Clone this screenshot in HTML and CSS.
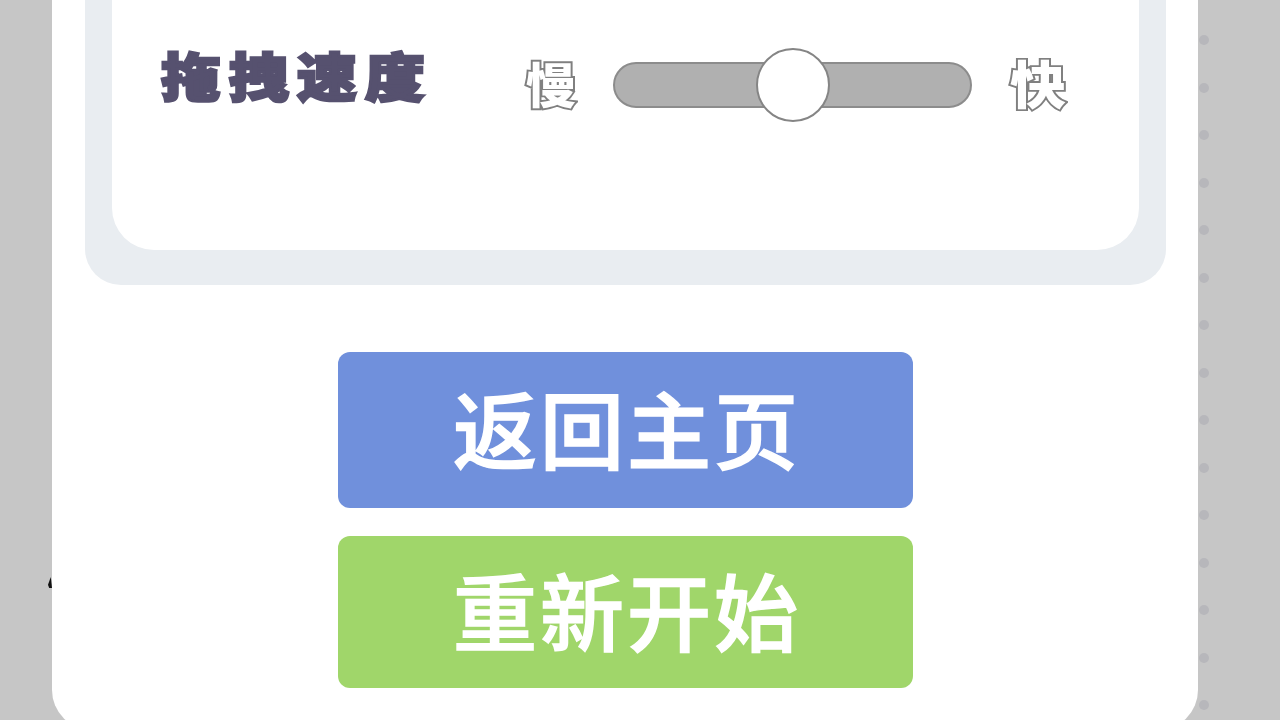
FILE: index.html
```html
<!DOCTYPE html>
<html lang="zh-CN">
<head>
<meta charset="utf-8">
<title>设置</title>
<link rel="stylesheet" href="styles.css">
</head>
<body>
<div class="stage">
  <main class="panel">
    <section class="frame">
      <div class="card">
        <div class="row">
          <span class="label">拖拽速度</span>
          <span class="end">慢</span>
          <div class="track"><div class="thumb"></div></div>
          <span class="end end-fast">快</span>
        </div>
      </div>
    </section>
    <div class="actions">
      <button class="btn btn-blue">返回主页</button>
      <button class="btn btn-green">重新开始</button>
    </div>
  </main>
  <div class="dots">
    <i></i><i></i><i></i><i></i><i></i><i></i><i></i><i></i><i></i><i></i><i></i><i></i><i></i><i></i><i></i>
  </div>
  <div class="speck"></div>
</div>
</body>
</html>
```

FILE: styles.css
```css
* { box-sizing: border-box; }
html, body { margin: 0; padding: 0; height: 720px; overflow: hidden; }
body {
  background: #c6c6c6;
  font-family: "Noto Sans CJK SC", "Liberation Sans", sans-serif;
}
.stage {
  position: relative;
  display: flex;
  align-items: flex-start;
  width: 1280px;
  height: 720px;
  overflow: hidden;
  padding-left: 52px;
  filter: blur(0.6px);
}
.panel {
  flex: none;
  width: 1146px;
  height: 730px;
  background: #fff;
  border-radius: 0 0 40px 40px;
  padding: 0 32px 0 33px;
}
.frame {
  background: #e9edf1;
  border-radius: 0 0 36px 36px;
  padding: 0 27px 35px;
  height: 285px;
}
.card {
  background: #fff;
  border-radius: 0 0 42px 42px;
  height: 250px;
}
.row {
  display: flex;
  align-items: center;
  padding: 44px 0 0 49px;
  height: 126px;
}
.label {
  width: 363px;
  font-size: 58px;
  line-height: 80px;
  font-weight: 900;
  letter-spacing: 8px;
  white-space: nowrap;
  color: #56516f;
  -webkit-text-stroke: 3px #56516f;
  margin-top: -22px;
  transform: scale(1.03, 0.9);
  transform-origin: left center;
}
.end {
  width: 54px;
  font-size: 50px;
  line-height: 70px;
  font-weight: 900;
  color: #fff;
  -webkit-text-stroke: 4px #808080;
  paint-order: stroke;
  margin: -7px 0 0 2px;
  transform: scaleY(0.96);
}
.end-fast {
  margin: -6px 0 0 38px;
  font-size: 56px;
  transform: scaleY(0.92);
}
.track {
  position: relative;
  width: 359px;
  height: 46px;
  margin-left: 33px;
  background: #b0b0b0;
  border: 2px solid #8c8c8c;
  border-radius: 23px;
}
.thumb {
  position: absolute;
  left: 141px;
  top: -16px;
  width: 74px;
  height: 74px;
  background: #fff;
  border: 2px solid #858585;
  border-radius: 50%;
}
.actions {
  display: flex;
  flex-direction: column;
  align-items: center;
  gap: 28px;
  padding-top: 67px;
}
.btn {
  display: block;
  width: 575px;
  border: 0;
  border-radius: 12px;
  padding: 0 0 7px 3px;
  color: #fff;
  font-family: inherit;
  font-size: 84px;
  font-weight: 500;
  letter-spacing: 3px;
  line-height: 1;
  text-align: center;
  -webkit-text-stroke: 1.5px #fff;
}
.btn-blue { height: 156px; background: #7090dc; }
.btn-green { height: 152px; background: #a0d66a; }
.dots {
  flex: none;
  display: flex;
  flex-direction: column;
  gap: 37.5px;
  margin: 35px 0 0 1px;
}
.dots i {
  display: block;
  width: 10px;
  height: 10px;
  border-radius: 50%;
  background: #b7b7bb;
}
.speck {
  position: absolute;
  left: 48px;
  top: 577px;
  width: 4px;
  height: 11px;
  background: #111;
  clip-path: polygon(70% 0, 100% 100%, 30% 100%, 0 70%);
}
```
